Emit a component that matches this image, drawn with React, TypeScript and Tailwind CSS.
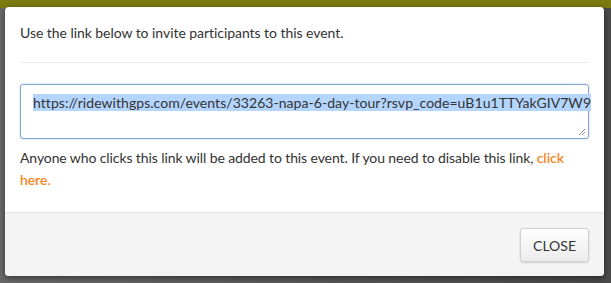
export default function App() {
  return (
    <div className="w-[611px] h-[283px] overflow-hidden bg-[#555] flex flex-col font-['Lato','Liberation_Sans',sans-serif]">
      <div className="h-[8px] bg-[#7b7b10] shrink-0" />
      <div className="flex flex-1 pl-[5px] pr-[7px] pb-[7px] bg-gradient-to-r from-[#6a6a6a] to-[#4a4a4a]">
        {/* Modal */}
        <div className="flex-1 flex flex-col bg-white rounded-[4px] -mt-[1px] overflow-hidden shadow-[0_2px_6px_rgba(0,0,0,0.5)]">
          <div className="px-[15px] pt-[16px] pb-[21px]">
            <p className="text-[14px] leading-[20px] text-[#333] tracking-[-0.05px]">
              Use the link below to invite participants to this event.
            </p>
            <div className="mt-[19px] h-px bg-[#ebebeb]" />
            <div className="mt-[21px] h-[55px] border border-[#7fa6d6] rounded-[3px] shadow-[0_0_2px_rgba(90,140,210,0.5)] px-[12px] pt-[5px] relative">
              <span className="text-[14px] leading-[22px] text-[#333] bg-[#b4d5fe] tracking-[0.05px] whitespace-nowrap">
                https://ridewithgps.com/events/33263-napa-6-day-tour?rsvp_code=uB1u1TTYakGIV7W9
              </span>
              <svg className="absolute right-[2px] bottom-[2px]" width="8" height="8" viewBox="0 0 8 8">
                <path d="M7 1L1 7M7 4L4 7" stroke="#888" strokeWidth="1" />
              </svg>
            </div>
            <p className="mt-[8px] text-[14px] leading-[22px] text-[#333] tracking-[-0.1px]">
              Anyone who clicks this link will be added to this event. If you need to disable this link,{" "}
              <a className="text-[#f7861e] font-semibold">click here.</a>
            </p>
          </div>
          <div className="flex-1 bg-[#f4f4f4] border-t border-[#e5e5e5] flex items-start justify-end pt-[15px] pr-[15px]">
            <button className="h-[34px] px-[12px] text-[14px] text-[#333] rounded-[3px] border border-[#d0d0d0] bg-gradient-to-b from-white to-[#ececec] shadow-[0_1px_2px_rgba(0,0,0,0.15)]">
              CLOSE
            </button>
          </div>
        </div>
      </div>
    </div>
  )
}
